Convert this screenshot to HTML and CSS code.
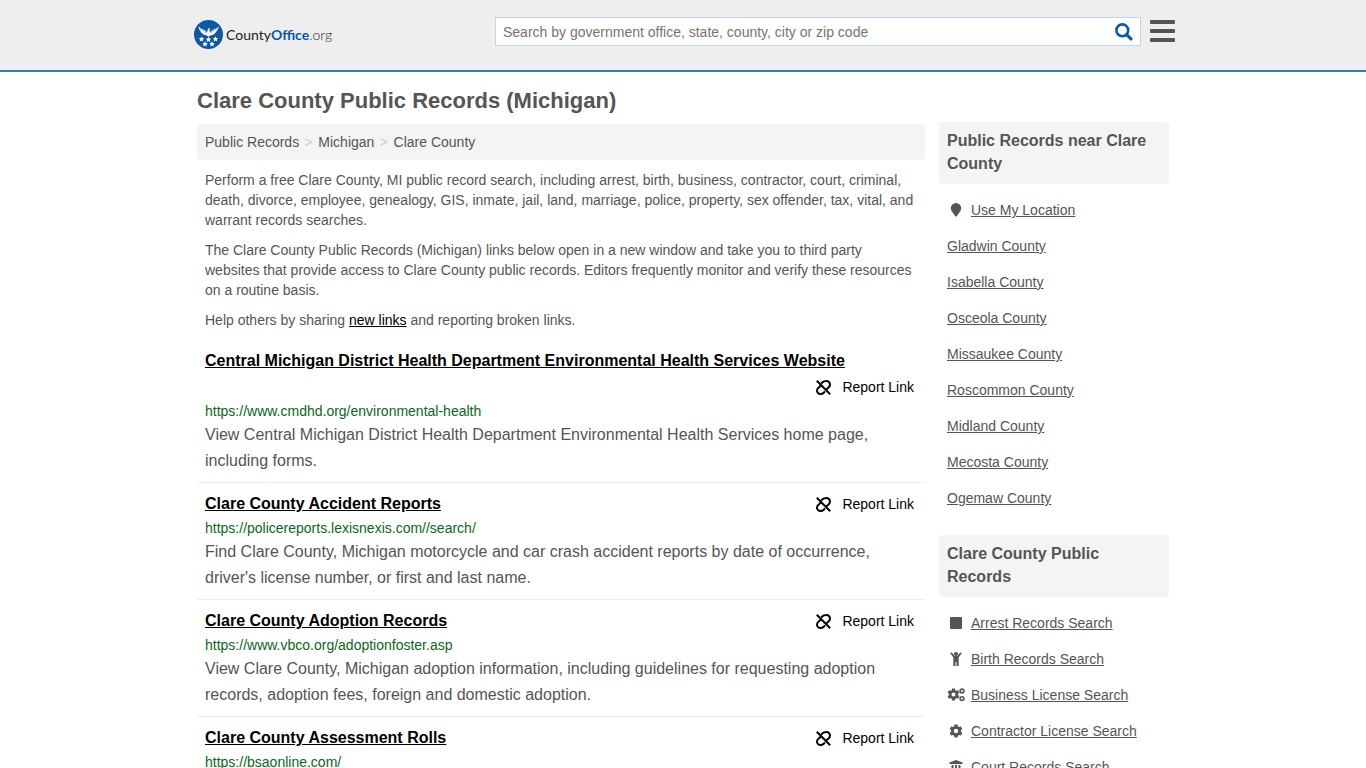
FILE: index.html
```html
<!DOCTYPE html>
<html lang="en">
<head>
    <meta charset="UTF-8">
    <meta name="viewport" content="width=device-width, initial-scale=1.0">
    <title>Clare County Public Records (Michigan)</title>
    <link rel="stylesheet" href="styles.css">
</head>
<body>
    <!-- shared icons -->
    <svg class="sprite" aria-hidden="true">
        <symbol id="unlink" viewBox="0 0 15 15">
            <g fill="none" stroke="currentColor" stroke-width="2">
                <path d="M.8.8l13.400 13.400"/>
                <path d="M5.200 3.600l1.300-1.300C7.500 1.300 8.800 1 10.300 1A3.600 3.600 0 0 1 14 4.600c0 1.500-.8 2.400-1.700 3.100L9.800 9.700"/>
                <path d="M5.200 5.300L2.700 7.500C1.700 8.300 1 9.200 1 10.500A3.500 3.500 0 0 0 4.500 14c1.400 0 2.300-.4 3.200-1.300l1.300-1.300"/>
            </g>
        </symbol>
        <symbol id="cog" viewBox="0 0 16 16">
            <path fill="currentColor" fill-rule="evenodd" d="M6.300.6h3.400l.4 2.100 1.400.8 2.100-.7 1.700 2.900-1.700 1.500v1.600l1.700 1.500-1.700 2.900-2.100-.7-1.400.8-.4 2.100H6.300l-.4-2.100-1.400-.8-2.100.7-1.700-2.900 1.700-1.500V7.200L.7 5.700l1.700-2.900 2.100.7 1.400-.8zM8 5.500a2.500 2.500 0 1 0 0 5a2.500 2.500 0 1 0 0-5z"/>
        </symbol>
    </svg>

    <header class="header">
        <div class="header-inner">
            <a class="logo" href="#">
                <svg width="29" height="29" viewBox="0 0 29 29" aria-hidden="true">
                    <defs>
                        <path id="star" d="M0-2.800l.8 1.800 2 .2-1.500 1.300.5 2L0 1.500l-1.800 1 .5-2-1.500-1.300 2-.2z"/>
                    </defs>
                    <circle cx="14.500" cy="14.500" r="14.500" fill="#0d57a5"/>
                    <g fill="#fff">
                        <path d="M4.600 6.500c1.600 2.200 4.700 2.400 6.700 4.100l1.900 2.100.4-2.900 1.100-1.600 1.600.4-.9.9.6 3.200 1.800-2.100c2-1.700 5.100-1.900 6.700-4.100 0 2.200-.8 3.300-1.700 4.100-.3 1.500-1.200 2.400-2.300 2.900-.9 1.100-2 1.600-3.200 1.500l-2.800 1.700-2.800-1.700c-1.200.1-2.300-.4-3.200-1.500-1.100-.5-2-1.400-2.300-2.900-.8-.8-1.600-1.900-1.600-4.100z"/>
                        <use href="#star" x="7.500" y="19"/>
                        <use href="#star" x="14.500" y="19.500"/>
                        <use href="#star" x="21.500" y="19"/>
                        <use href="#star" x="11" y="24"/>
                        <use href="#star" x="18" y="24"/>
                    </g>
                    <path d="M6 8.300c2 1.700 4.500 2 6.200 4.500M23.200 8.300c-2 1.700-4.500 2-6.200 4.500" fill="none" stroke="#0d57a5" stroke-width=".5"/>
                </svg>
                <span class="logo-text">County<b>Office</b><span class="logo-org"><i>.</i>org</span></span>
            </a>
            <form class="search">
                <input type="text" aria-label="Search" placeholder="Search by government office, state, county, city or zip code">
                <button type="button" class="search-btn" aria-label="Search">
                    <svg width="18" height="18" viewBox="0 0 18 18" fill="none" stroke="#0d57a5" aria-hidden="true">
                        <circle cx="7.300" cy="7.300" r="5.900" stroke-width="2.600"/>
                        <path d="M11.600 11.600l5.300 5.300" stroke-width="3"/>
                    </svg>
                </button>
            </form>
            <button type="button" class="menu-btn" aria-label="Menu">
                <span></span><span></span><span></span>
            </button>
        </div>
    </header>

    <div class="container">
        <h1>Clare County Public Records (Michigan)</h1>
        <div class="columns">
            <main class="main">
                <nav class="breadcrumb">
                    <a href="#">Public Records</a><span>&gt;</span><a href="#">Michigan</a><span>&gt;</span><a href="#">Clare County</a>
                </nav>

                <div class="intro">
                    <p>Perform a free Clare County, MI public record search, including arrest, birth, business, contractor, court, criminal, death, divorce, employee, genealogy, GIS, inmate, jail, land, marriage, police, property, sex offender, tax, vital, and warrant records searches.</p>
                    <p>The Clare County Public Records (Michigan) links below open in a new window and take you to third party websites that provide access to Clare County public records. Editors frequently monitor and verify these resources on a routine basis.</p>
                    <p>Help others by sharing <a href="#">new links</a> and reporting broken links.</p>
                </div>

                <div class="record">
                    <div class="record-head">
                        <a class="record-title" href="#">Central Michigan District Health Department Environmental Health Services Website</a>
                        <button type="button" class="report"><svg><use href="#unlink"/></svg>Report Link</button>
                    </div>
                    <div class="record-url">https://www.cmdhd.org/environmental-health</div>
                    <p>View Central Michigan District Health Department Environmental Health Services home page, including forms.</p>
                </div>
                <div class="record">
                    <div class="record-head">
                        <a class="record-title" href="#">Clare County Accident Reports</a>
                        <button type="button" class="report"><svg><use href="#unlink"/></svg>Report Link</button>
                    </div>
                    <div class="record-url">https://policereports.lexisnexis.com//search/</div>
                    <p>Find Clare County, Michigan motorcycle and car crash accident reports by date of occurrence, driver's license number, or first and last name.</p>
                </div>
                <div class="record">
                    <div class="record-head">
                        <a class="record-title" href="#">Clare County Adoption Records</a>
                        <button type="button" class="report"><svg><use href="#unlink"/></svg>Report Link</button>
                    </div>
                    <div class="record-url">https://www.vbco.org/adoptionfoster.asp</div>
                    <p>View Clare County, Michigan adoption information, including guidelines for requesting adoption records, adoption fees, foreign and domestic adoption.</p>
                </div>
                <div class="record">
                    <div class="record-head">
                        <a class="record-title" href="#">Clare County Assessment Rolls</a>
                        <button type="button" class="report"><svg><use href="#unlink"/></svg>Report Link</button>
                    </div>
                    <div class="record-url">https://bsaonline.com/</div>
                </div>
            </main>

            <aside class="sidebar">
                <h2>Public Records near Clare County</h2>
                <ul>
                    <li>
                        <svg viewBox="0 0 18 16"><path fill="currentColor" d="M9 1a5.200 5.200 0 0 1 5.200 5.200c0 3-3 5.300-4.300 7.900a1 1 0 0 1-1.800 0C6.800 11.500 3.800 9.200 3.800 6.200A5.200 5.200 0 0 1 9 1z"/></svg>
                        <a href="#">Use My Location</a>
                    </li>
                    <li><a href="#">Gladwin County</a></li>
                    <li><a href="#">Isabella County</a></li>
                    <li><a href="#">Osceola County</a></li>
                    <li><a href="#">Missaukee County</a></li>
                    <li><a href="#">Roscommon County</a></li>
                    <li><a href="#">Midland County</a></li>
                    <li><a href="#">Mecosta County</a></li>
                    <li><a href="#">Ogemaw County</a></li>
                </ul>

                <h2>Clare County Public Records</h2>
                <ul>
                    <li>
                        <svg viewBox="0 0 18 16"><rect x="3" y="2" width="12" height="12" rx="1" fill="currentColor"/></svg>
                        <a href="#">Arrest Records Search</a>
                    </li>
                    <li>
                        <svg viewBox="0 0 18 16"><circle cx="9" cy="3" r="2.100" fill="currentColor"/><path fill="currentColor" d="M4.700 1.200L7.600 5h2.800l2.900-3.800 1.400 1.100-3 4.100V15H9.500v-4h-1v4H6.300V6.400l-3-4.100z"/></svg>
                        <a href="#">Birth Records Search</a>
                    </li>
                    <li>
                        <svg viewBox="0 0 18 16"><use href="#cog" x="0" y="1" width="13" height="13"/><g fill="none" stroke="currentColor"><circle cx="15" cy="4" r="1.900" stroke-width="1.600"/><circle cx="15" cy="11.600" r="1.900" stroke-width="1.600"/></g></svg>
                        <a href="#">Business License Search</a>
                    </li>
                    <li>
                        <svg viewBox="0 0 18 16"><use href="#cog" x="2" y="1" width="14" height="14"/></svg>
                        <a href="#">Contractor License Search</a>
                    </li>
                    <li>
                        <svg viewBox="0 0 18 16"><path fill="currentColor" d="M9 1l6.500 2.500V5h-13V3.500zM4.500 6h2v6h1.500V6h2v6h1.500V6h2v6h1v2h-11v-2h1z"/></svg>
                        <a href="#">Court Records Search</a>
                    </li>
                </ul>
            </aside>
        </div>
    </div>
</body>
</html>
```
FILE: styles.css
```css
* {
    box-sizing: border-box;
}
body {
    margin: 0;
    font-family: "Liberation Sans", Arial, Helvetica, sans-serif;
    font-size: 14px;
    line-height: 20px;
    color: #555;
    background: #fff;
}
a {
    color: inherit;
}
button {
    font: inherit;
    padding: 0;
    border: 0;
    background: none;
    cursor: pointer;
}
.sprite {
    display: none;
}

/* header */
.header {
    background: #eee;
    border-bottom: 2px solid #337ab7;
}
.header-inner {
    display: flex;
    align-items: flex-start;
    max-width: 984px;
    height: 70px;
    margin: 0 auto;
    padding: 17px 0 0 3px;
}
.logo {
    display: flex;
    align-items: center;
    gap: 3px;
    padding-top: 3px;
    color: #222;
    text-decoration: none;
}
.logo-text {
    font-family: Lato, "Liberation Sans", sans-serif;
    font-size: 14px;
}
.logo-text b,
.logo-text i {
    color: #0d57a5;
    font-style: normal;
}
.logo-org {
    font-weight: 300;
}
.search {
    display: flex;
    flex: 0 1 646px;
    height: 29px;
    margin-left: auto;
    background: #fff;
    border: 1px solid #bcd6ea;
}
.search input {
    flex: 1;
    min-width: 0;
    padding: 0 7px;
    border: 0;
    outline: 0;
    background: none;
    font: inherit;
    color: #555;
}
.search input::placeholder {
    color: #757575;
}
.search-btn {
    display: flex;
    align-items: center;
    padding-right: 7px;
}
.menu-btn {
    display: flex;
    flex-direction: column;
    gap: 5px;
    width: 25px;
    margin: 3px 0 0 9px;
}
.menu-btn span {
    height: 4px;
    border-radius: 1px;
    background: #555;
}

/* page */
.container {
    max-width: 972px;
    margin: 0 auto;
}
h1 {
    margin: 0;
    padding: 15px 0 7px;
    font-size: 22px;
    line-height: 28px;
}
.columns {
    display: flex;
    gap: 14px;
}
.main {
    flex: 1;
    min-width: 0;
    padding-top: 2px;
}
.breadcrumb {
    padding: 8px;
    border-radius: 4px;
    background: #f4f4f4;
}
.breadcrumb a {
    text-decoration: none;
}
.breadcrumb span {
    padding: 0 6px 0 5px;
    color: #ccc;
}
.intro {
    padding: 10px 8px;
}
.intro p {
    margin: 0 0 10px;
}
.intro p:last-child {
    margin-bottom: 0;
}
.intro a {
    color: #000;
}

/* record list */
.record {
    padding: 8px;
    border-bottom: 1px solid #eee;
}
.record:last-child {
    border-bottom: 0;
}
.record-head {
    display: flex;
    flex-wrap: wrap;
    align-items: center;
    margin-bottom: 1px;
    line-height: 26px;
}
.record-title {
    font-size: 16px;
    font-weight: bold;
    color: #000;
}
.report {
    display: flex;
    align-items: center;
    gap: 11px;
    margin-left: auto;
    padding-right: 3px;
    color: #000;
}
.report svg {
    width: 15px;
    height: 15px;
}
.record-url {
    margin-bottom: 1px;
    color: #0b6623;
}
.record p {
    margin: 0;
    font-size: 16px;
    line-height: 26px;
}

/* sidebar */
.sidebar {
    flex: 0 0 230px;
}
.sidebar h2 {
    margin: 0 0 8px;
    padding: 7px 8px 9px;
    border-radius: 4px;
    background: #f4f4f4;
    font-size: 16px;
    line-height: 23px;
}
.sidebar ul {
    margin: 0 0 19px;
    padding: 0 8px;
    list-style: none;
}
.sidebar li {
    display: flex;
    align-items: center;
    gap: 6px;
    height: 36px;
}
.sidebar li svg {
    width: 18px;
    height: 16px;
}
```
